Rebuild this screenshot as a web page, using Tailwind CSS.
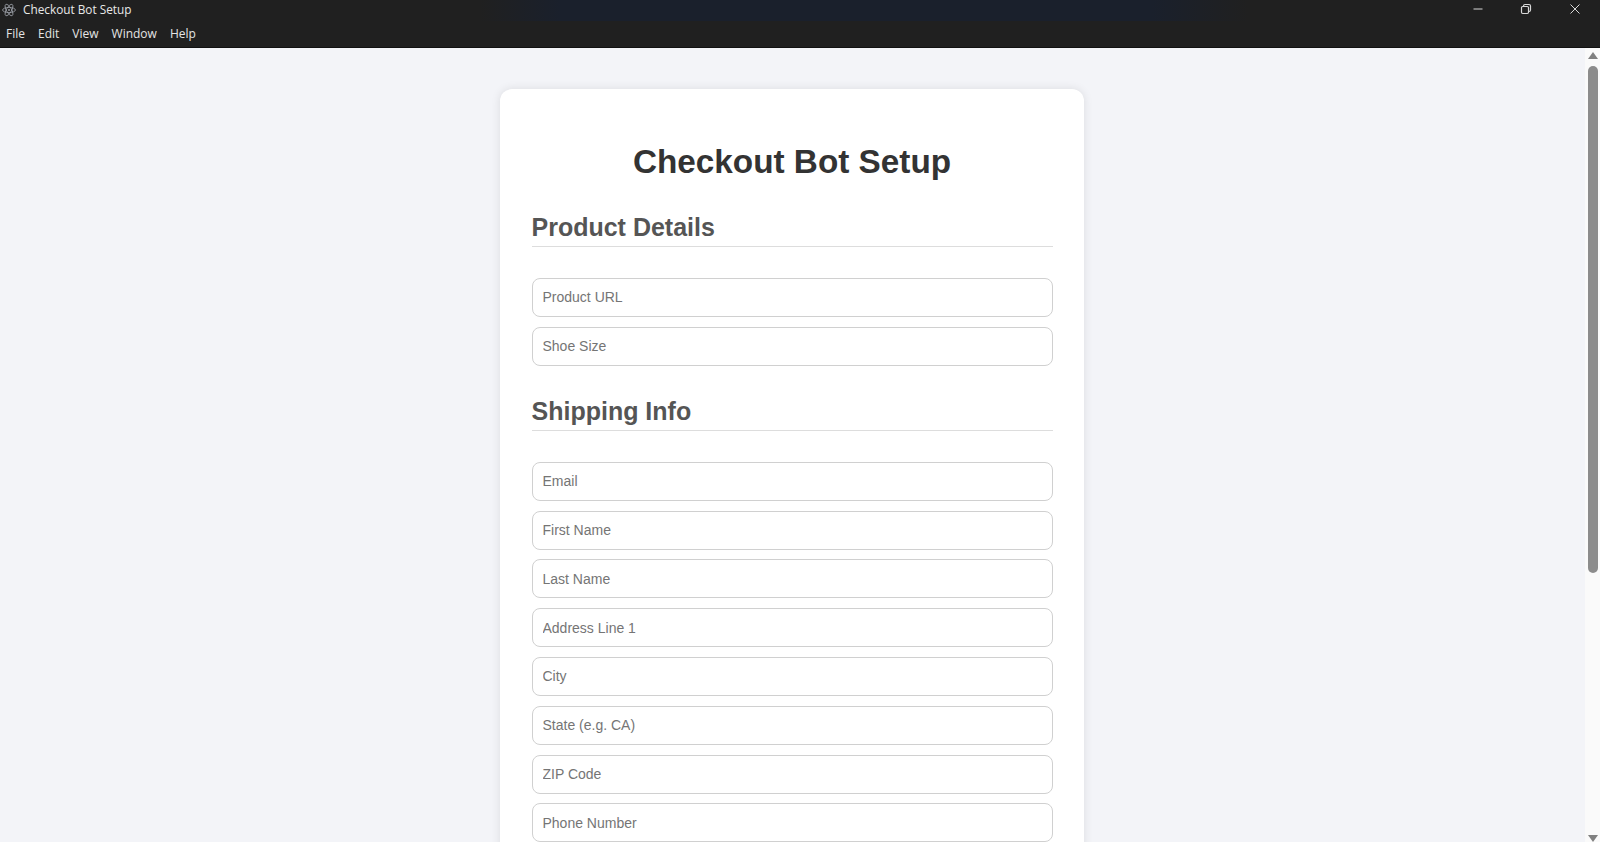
<!DOCTYPE html>
<html lang="en">
<head>
  <meta charset="UTF-8" />
  <title>Checkout Bot Setup</title>
  <script src="https://cdn.jsdelivr.net/npm/@tailwindcss/browser@4"></script>
</head>
<body class="h-[842px] w-[1600px] overflow-hidden flex flex-col bg-[#f3f4f8] font-['Liberation_Sans',sans-serif]">

  <!-- Title bar -->
  <div class="h-[21px] shrink-0 flex items-center bg-[linear-gradient(to_right,#202020_30%,#1a202c_35%,#1a202c_72%,#202020_78%)] text-[#e8e8e8] font-['Open_Sans',sans-serif] text-[11.8px]">
    <svg class="ml-[2px] mb-[2px] w-[14px] h-[14px]" viewBox="0 0 24 24" fill="none" stroke="#9a9ea6" stroke-width="1.4">
      <ellipse cx="12" cy="12" rx="11" ry="4.4" />
      <ellipse cx="12" cy="12" rx="11" ry="4.4" transform="rotate(60 12 12)" />
      <ellipse cx="12" cy="12" rx="11" ry="4.4" transform="rotate(120 12 12)" />
      <circle cx="12" cy="12" r="1.6" fill="#9a9ea6" stroke="none" />
    </svg>
    <span class="ml-[7px] pb-[2px]">Checkout Bot Setup</span>
    <div class="ml-auto flex items-center pb-[4px]">
      <svg class="w-[12px] h-[12px] mr-[36px]" viewBox="0 0 12 12" stroke="#d8d8d8" fill="none"><path d="M1.5 6h9" /></svg>
      <svg class="w-[12px] h-[12px] mr-[37px]" viewBox="0 0 12 12" stroke="#d8d8d8" stroke-width="1.2" fill="none"><rect x="1.5" y="3.5" width="7" height="7" rx="1.2" /><path d="M3.5 3.5v-.5a1.5 1.5 0 0 1 1.5-1.5h4a1.5 1.5 0 0 1 1.5 1.5v4a1.5 1.5 0 0 1-1.5 1.5h-.5" /></svg>
      <svg class="w-[12px] h-[12px] mr-[19px]" viewBox="0 0 12 12" stroke="#d8d8d8" fill="none"><path d="M1.5 1.5l9 9M10.5 1.5l-9 9" /></svg>
    </div>
  </div>

  <!-- Menu bar -->
  <div class="h-[27px] shrink-0 flex items-center gap-[13px] pl-[6px] bg-[#202020] text-[#e4e4e4] font-['Open_Sans',sans-serif] text-[12px] border-b border-[#111]">
    <span>File</span>
    <span>Edit</span>
    <span>View</span>
    <span>Window</span>
    <span>Help</span>
  </div>

  <div class="flex-1 min-h-0 flex">
    <main class="flex-1 min-w-0 overflow-hidden">
      <div class="ml-[500px] mt-[41px] w-[584px] px-[31.5px] py-[31px] bg-white rounded-[12px] shadow-[0_0_10px_rgba(0,0,0,0.1)]">
        <h1 class="text-[33.3px] leading-[41px] font-bold text-[#333] text-center mt-[21px] mb-[30px]">Checkout Bot Setup</h1>

        <h2 class="text-[25px] leading-[31px] font-bold text-[#555] pb-[3px] border-b border-[#ddd] mb-[31px]">Product Details</h2>
        <div class="flex flex-col gap-[9.8px]">
          <input class="h-[39px] px-[10px] pb-[1px] text-[14px] border border-[#d0d0d0] rounded-[8px] placeholder:text-[#757575]" placeholder="Product URL" />
          <input class="h-[39px] px-[10px] pb-[1px] text-[14px] border border-[#d0d0d0] rounded-[8px] placeholder:text-[#757575]" placeholder="Shoe Size" />
        </div>

        <h2 class="mt-[30px] text-[25px] leading-[31px] font-bold text-[#555] pb-[3px] border-b border-[#ddd] mb-[31px]">Shipping Info</h2>
        <div class="flex flex-col gap-[9.8px]">
          <input class="h-[39px] px-[10px] text-[14px] border border-[#d0d0d0] rounded-[8px] placeholder:text-[#757575]" placeholder="Email" />
          <input class="h-[39px] px-[10px] text-[14px] border border-[#d0d0d0] rounded-[8px] placeholder:text-[#757575]" placeholder="First Name" />
          <input class="h-[39px] px-[10px] text-[14px] border border-[#d0d0d0] rounded-[8px] placeholder:text-[#757575]" placeholder="Last Name" />
          <input class="h-[39px] px-[10px] text-[14px] border border-[#d0d0d0] rounded-[8px] placeholder:text-[#757575]" placeholder="Address Line 1" />
          <input class="h-[39px] px-[10px] text-[14px] border border-[#d0d0d0] rounded-[8px] placeholder:text-[#757575]" placeholder="City" />
          <input class="h-[39px] px-[10px] text-[14px] border border-[#d0d0d0] rounded-[8px] placeholder:text-[#757575]" placeholder="State (e.g. CA)" />
          <input class="h-[39px] px-[10px] text-[14px] border border-[#d0d0d0] rounded-[8px] placeholder:text-[#757575]" placeholder="ZIP Code" />
          <input class="h-[39px] px-[10px] text-[14px] border border-[#d0d0d0] rounded-[8px] placeholder:text-[#757575]" placeholder="Phone Number" />
        </div>
      </div>
    </main>

    <!-- Scrollbar -->
    <div class="w-[15px] shrink-0 flex flex-col items-center bg-[#fafafa] pt-[4px]">
      <div class="w-0 h-0 border-x-[5px] border-x-transparent border-b-[7px] border-b-[#808080]"></div>
      <div class="mt-[7px] w-[10px] h-[507px] rounded-full bg-[#8c8c8c]"></div>
      <div class="mt-auto w-0 h-0 border-x-[5px] border-x-transparent border-t-[7px] border-t-[#808080]"></div>
    </div>
  </div>
</body>
</html>
